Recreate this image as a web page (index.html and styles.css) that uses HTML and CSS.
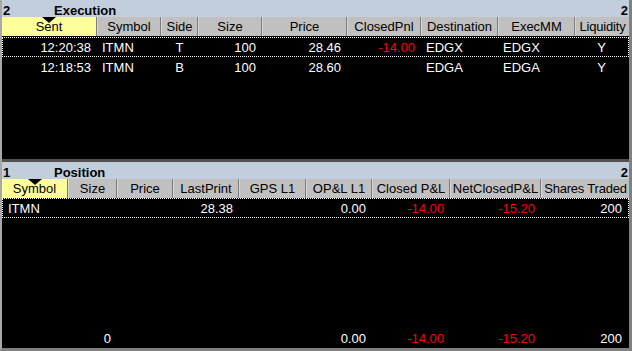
FILE: index.html
```html
<!DOCTYPE html>
<html>
<head>
<meta charset="utf-8">
<link rel="stylesheet" href="styles.css">
</head>
<body>
<div class="app">
  <section class="panel panel-exec">
    <div class="titlebar">
      <span class="num">2</span><span class="title">Execution</span><span class="count">2</span>
    </div>
    <div class="head exec-cols">
      <div class="hc sorted">Sent<i class="tri"></i></div>
      <div class="hc">Symbol</div>
      <div class="hc">Side</div>
      <div class="hc">Size</div>
      <div class="hc">Price</div>
      <div class="hc">ClosedPnl</div>
      <div class="hc">Destination</div>
      <div class="hc">ExecMM</div>
      <div class="hc">Liquidity</div>
    </div>
    <div class="body">
      <div class="row exec-cols focus">
        <div class="c r">12:20:38</div>
        <div class="c l">ITMN</div>
        <div class="c m">T</div>
        <div class="c r">100</div>
        <div class="c r">28.46</div>
        <div class="c r neg">-14.00</div>
        <div class="c l">EDGX</div>
        <div class="c l">EDGX</div>
        <div class="c m">Y</div>
      </div>
      <div class="row exec-cols">
        <div class="c r">12:18:53</div>
        <div class="c l">ITMN</div>
        <div class="c m">B</div>
        <div class="c r">100</div>
        <div class="c r">28.60</div>
        <div class="c r neg"></div>
        <div class="c l">EDGA</div>
        <div class="c l">EDGA</div>
        <div class="c m">Y</div>
      </div>
    </div>
  </section>
  <div class="divider"></div>
  <section class="panel panel-pos">
    <div class="titlebar">
      <span class="num">1</span><span class="title">Position</span><span class="count">2</span>
    </div>
    <div class="head pos-cols">
      <div class="hc sorted">Symbol<i class="tri"></i></div>
      <div class="hc">Size</div>
      <div class="hc">Price</div>
      <div class="hc">LastPrint</div>
      <div class="hc">GPS L1</div>
      <div class="hc">OP&amp;L L1</div>
      <div class="hc">Closed P&amp;L</div>
      <div class="hc">NetClosedP&amp;L</div>
      <div class="hc">Shares Traded</div>
    </div>
    <div class="body pos-body">
      <div class="row pos-cols focus">
        <div class="c l">ITMN</div>
        <div class="c r"></div>
        <div class="c r"></div>
        <div class="c r">28.38</div>
        <div class="c r"></div>
        <div class="c r">0.00</div>
        <div class="c r neg">-14.00</div>
        <div class="c r neg">-15.20</div>
        <div class="c r">200</div>
      </div>
      <div class="row pos-cols total">
        <div class="c l"></div>
        <div class="c r">0</div>
        <div class="c r"></div>
        <div class="c r"></div>
        <div class="c r"></div>
        <div class="c r">0.00</div>
        <div class="c r neg">-14.00</div>
        <div class="c r neg">-15.20</div>
        <div class="c r">200</div>
      </div>
    </div>
  </section>
</div>
</body>
</html>
```

FILE: styles.css
```css
html, body {
  margin: 0;
  padding: 0;
  background: #000;
}

.app {
  width: 632px;
  height: 351px;
  box-sizing: border-box;
  border-left: 2px solid #a8a8a8;
  border-right: 3px solid #808080;
  border-bottom: 3px solid #808080;
  display: flex;
  flex-direction: column;
  font-family: "Liberation Sans", Arial, sans-serif;
  font-size: 13px;
  background: #000;
  overflow: hidden;
}

.panel {
  display: flex;
  flex-direction: column;
}

.panel-exec {
  height: 159px;
}

.panel-pos {
  flex: 1;
  min-height: 0;
}

.divider {
  height: 3px;
  background: #505050;
  flex: none;
}

.titlebar {
  height: 17px;
  box-sizing: border-box;
  padding: 5px 1px 0 1px;
  line-height: 12px;
  background: #c2cedb;
  color: #000;
  font-weight: bold;
  display: flex;
  flex: none;
}

.titlebar .num {
  width: 51px;
}

.titlebar .title {
  flex: 1;
}

.titlebar .count {
  text-align: right;
}

.exec-cols {
  display: grid;
  grid-template-columns: 95px 64px 37px 64px 85px 74px 77px 77px 54px;
}

.pos-cols {
  display: grid;
  grid-template-columns: 66px 49px 56px 66px 67px 66px 78px 91px 88px;
}

.head {
  height: 19px;
  flex: none;
}

.hc {
  position: relative;
  background: #c0c0c0;
  color: #000;
  text-align: center;
  box-sizing: border-box;
  padding-top: 1px;
  line-height: 18px;
  border-right: 1px solid #7c7c7c;
  border-left: 1px solid #d6d6d6;
  white-space: nowrap;
  overflow: hidden;
}

.hc:first-child {
  border-left: none;
}

.hc:last-child {
  border-right: none;
  letter-spacing: -0.2px;
}

.hc.sorted {
  background: #ffff99;
  overflow: visible;
}

.tri {
  position: absolute;
  top: 0;
  left: 50%;
  margin-left: -7px;
  width: 0;
  height: 0;
  border-left: 7px solid transparent;
  border-right: 7px solid transparent;
  border-top: 6px solid #000;
}

.body {
  flex: 1;
  min-height: 0;
  display: flex;
  flex-direction: column;
  padding-top: 1px;
  background: #000;
}

.pos-body {
  padding-top: 0;
}

.row {
  height: 20px;
  box-sizing: border-box;
  border: 1px solid transparent;
  color: #fff;
  flex: none;
}

.row.focus {
  border: 1px dotted #fff;
}

.exec-cols.row {
  grid-template-columns: 94px 64px 37px 64px 85px 74px 77px 77px 53px;
}

.pos-cols.row {
  grid-template-columns: 65px 49px 56px 66px 67px 66px 78px 91px 87px;
}

.c {
  line-height: 18px;
  padding-top: 1px;
  white-space: nowrap;
  overflow: hidden;
}

.c.r {
  text-align: right;
  padding-right: 6px;
}

.c.l {
  text-align: left;
  padding-left: 5px;
}

.c.m {
  text-align: center;
}

.neg {
  color: #ff0000;
}

.row.total {
  margin-top: auto;
}
```
